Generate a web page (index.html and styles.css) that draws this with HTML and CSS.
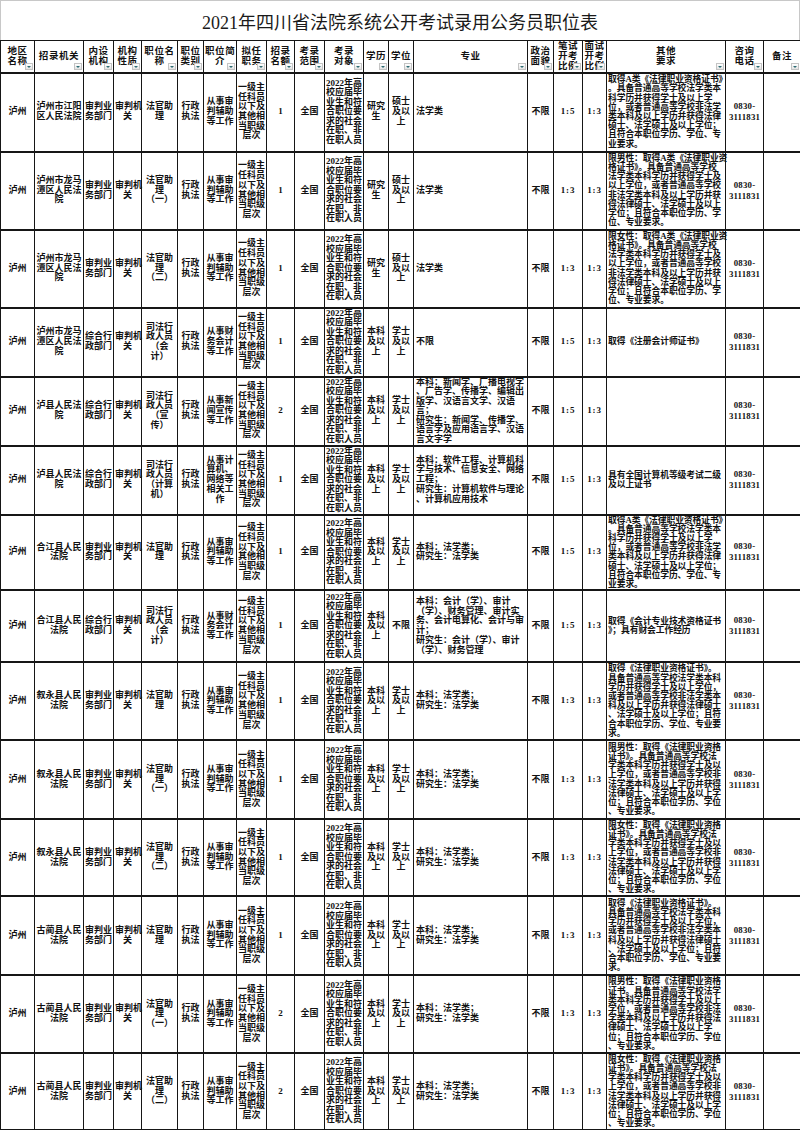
FILE: index.html
```html
<!DOCTYPE html>
<html lang="zh-CN">
<head>
<meta charset="utf-8">
<title>2021年四川省法院系统公开考试录用公务员职位表</title>
<link rel="stylesheet" href="styles.css">
</head>
<body>
<div class="sheet">
  <div class="title">2021年四川省法院系统公开考试录用公务员职位表</div>
  <table class="grid">
    <colgroup>
      <col class="w34"><col class="w49"><col class="w30"><col class="w28"><col class="w36"><col class="w26"><col class="w33"><col class="w30"><col class="w28"><col class="w30"><col class="w39"><col class="w25"><col class="w25"><col class="w114"><col class="w26"><col class="w29"><col class="w24"><col class="w119"><col class="w38"><col class="w37">
    </colgroup>
    <thead>
      <tr class="hd">
        <th>地区<br>名称<span class="flt"></span></th>
        <th>招录机关<span class="flt"></span></th>
        <th>内设<br>机构<span class="flt"></span></th>
        <th>机构<br>性质<span class="flt"></span></th>
        <th>职位名<br>称<span class="flt"></span></th>
        <th>职位<br>类别<span class="flt"></span></th>
        <th>职位简<br>介<span class="flt"></span></th>
        <th>拟任<br>职务<span class="flt"></span></th>
        <th>招录<br>名额<span class="flt"></span></th>
        <th>考录<br>范围<span class="flt"></span></th>
        <th>考录<br>对象<span class="flt"></span></th>
        <th>学历<span class="flt"></span></th>
        <th>学位<span class="flt"></span></th>
        <th>专业<span class="flt"></span></th>
        <th>政治<br>面貌<span class="flt"></span></th>
        <th>笔试<br>开考<br>比例<span class="flt"></span></th>
        <th>面试<br>开考<br>比例<span class="flt"></span></th>
        <th>其他<br>要求<span class="flt"></span></th>
        <th>咨询<br>电话<span class="flt"></span></th>
        <th>备注<span class="flt"></span></th>
      </tr>
    </thead>
    <tbody>
      <tr class="h79">
        <td>泸州</td><td>泸州市江阳<br>区人民法院</td><td>审判业<br>务部门</td><td>审判机<br>关</td><td>法官助<br>理</td><td>行政<br>执法</td><td>从事审<br>判辅助<br>等工作</td><td>一级主<br>任科员<br>以下及<br>其他相<br>当职级<br>层次</td><td>1</td><td>全国</td><td class="dx">2022年高<br>校应届毕<br>业生和符<br>合职位要<br>求的社会<br>在职、非<br>在职人员</td><td>研究<br>生</td><td>硕士<br>及以<br>上</td><td class="l">法学类</td><td>不限</td><td class="n">1:5</td><td class="n">1:3</td>
        <td class="req">取得A类《法律职业资格证书》<br>。具备普通高等学校法学类本<br>科学历并获得学士及以上学<br>位，或者普通高等学校非法学<br>类本科及以上学历并获得法律<br>硕士、法学硕士及以上学位；<br>且符合本职位学历、学位、专<br>业要求。</td><td class="ph">0830-<br>3111831</td><td></td>
      </tr>
      <tr class="h78">
        <td>泸州</td><td>泸州市龙马<br>潭区人民法<br>院</td><td>审判业<br>务部门</td><td>审判机<br>关</td><td>法官助<br>理<br>（一）</td><td>行政<br>执法</td><td>从事审<br>判辅助<br>等工作</td><td>一级主<br>任科员<br>以下及<br>其他相<br>当职级<br>层次</td><td>1</td><td>全国</td><td class="dx">2022年高<br>校应届毕<br>业生和符<br>合职位要<br>求的社会<br>在职、非<br>在职人员</td><td>研究<br>生</td><td>硕士<br>及以<br>上</td><td class="l">法学类</td><td>不限</td><td class="n">1:3</td><td class="n">1:3</td>
        <td class="req">限男性：取得A类《法律职业资<br>格证书》。具备普通高等学校<br>法学类本科学历并获得学士及<br>以上学位，或者普通高等学校<br>非法学类本科及以上学历并获<br>得法律硕士、法学硕士及以上<br>学位；且符合本职位学历、学<br>位、专业要求。</td><td class="ph">0830-<br>3111831</td><td></td>
      </tr>
      <tr class="h78">
        <td>泸州</td><td>泸州市龙马<br>潭区人民法<br>院</td><td>审判业<br>务部门</td><td>审判机<br>关</td><td>法官助<br>理<br>（二）</td><td>行政<br>执法</td><td>从事审<br>判辅助<br>等工作</td><td>一级主<br>任科员<br>以下及<br>其他相<br>当职级<br>层次</td><td>1</td><td>全国</td><td class="dx">2022年高<br>校应届毕<br>业生和符<br>合职位要<br>求的社会<br>在职、非<br>在职人员</td><td>研究<br>生</td><td>硕士<br>及以<br>上</td><td class="l">法学类</td><td>不限</td><td class="n">1:3</td><td class="n">1:3</td>
        <td class="req">限女性：取得A类《法律职业资<br>格证书》。具备普通高等学校<br>法学类本科学历并获得学士及<br>以上学位，或者普通高等学校<br>非法学类本科及以上学历并获<br>得法律硕士、法学硕士及以上<br>学位；且符合本职位学历、学<br>位、专业要求。</td><td class="ph">0830-<br>3111831</td><td></td>
      </tr>
      <tr class="h69">
        <td>泸州</td><td>泸州市龙马<br>潭区人民法<br>院</td><td>综合行<br>政部门</td><td>审判机<br>关</td><td>司法行<br>政人员<br>（会<br>计）</td><td>行政<br>执法</td><td>从事财<br>务会计<br>等工作</td><td>一级主<br>任科员<br>以下及<br>其他相<br>当职级<br>层次</td><td>1</td><td>全国</td><td class="dx">2022年高<br>校应届毕<br>业生和符<br>合职位要<br>求的社会<br>在职、非<br>在职人员</td><td>本科<br>及以<br>上</td><td>学士<br>及以<br>上</td><td class="l">不限</td><td>不限</td><td class="n">1:5</td><td class="n">1:3</td>
        <td class="req">取得《注册会计师证书》</td><td class="ph">0830-<br>3111831</td><td></td>
      </tr>
      <tr class="h69">
        <td>泸州</td><td>泸县人民法<br>院</td><td>综合行<br>政部门</td><td>审判机<br>关</td><td>司法行<br>政人员<br>（宣<br>传）</td><td>行政<br>执法</td><td>从事新<br>闻宣传<br>等工作</td><td>一级主<br>任科员<br>以下及<br>其他相<br>当职级<br>层次</td><td>2</td><td>全国</td><td class="dx">2022年高<br>校应届毕<br>业生和符<br>合职位要<br>求的社会<br>在职、非<br>在职人员</td><td>本科<br>及以<br>上</td><td>学士<br>及以<br>上</td><td class="l dx">本科：新闻学、广播电视学<br>、广告学、传播学、编辑出<br>版学、汉语言文学、汉语<br>言；<br>研究生：新闻学、传播学、<br>语言学及应用语言学、汉语<br>言文字学</td><td>不限</td><td class="n">1:5</td><td class="n">1:3</td>
        <td class="req"></td><td class="ph">0830-<br>3111831</td><td></td>
      </tr>
      <tr class="h69">
        <td>泸州</td><td>泸县人民法<br>院</td><td>综合行<br>政部门</td><td>审判机<br>关</td><td>司法行<br>政人员<br>（计算<br>机）</td><td>行政<br>执法</td><td>从事计<br>算机、<br>网络等<br>相关工<br>作</td><td>一级主<br>任科员<br>以下及<br>其他相<br>当职级<br>层次</td><td>1</td><td>全国</td><td class="dx">2022年高<br>校应届毕<br>业生和符<br>合职位要<br>求的社会<br>在职、非<br>在职人员</td><td>本科<br>及以<br>上</td><td>学士<br>及以<br>上</td><td class="l">本科：软件工程、计算机科<br>学与技术、信息安全、网络<br>工程；<br>研究生：计算机软件与理论<br>、计算机应用技术</td><td>不限</td><td class="n">1:5</td><td class="n">1:3</td>
        <td class="req">具有全国计算机等级考试二级<br>及以上证书</td><td class="ph">0830-<br>3111831</td><td></td>
      </tr>
      <tr class="h74">
        <td>泸州</td><td>合江县人民<br>法院</td><td>审判业<br>务部门</td><td>审判机<br>关</td><td>法官助<br>理</td><td>行政<br>执法</td><td>从事审<br>判辅助<br>等工作</td><td>一级主<br>任科员<br>以下及<br>其他相<br>当职级<br>层次</td><td>1</td><td>全国</td><td class="dx">2022年高<br>校应届毕<br>业生和符<br>合职位要<br>求的社会<br>在职、非<br>在职人员</td><td>本科<br>及以<br>上</td><td>学士<br>及以<br>上</td><td class="l">本科：法学类；<br>研究生：法学类</td><td>不限</td><td class="n">1:5</td><td class="n">1:3</td>
        <td class="req">取得A类《法律职业资格证书》<br>。具备普通高等学校法学类本<br>科学历并获得学士及以上学<br>位，或者普通高等学校非法学<br>类本科及以上学历并获得法律<br>硕士、法学硕士及以上学位；<br>且符合本职位学历、学位、专<br>业要求。</td><td class="ph">0830-<br>3111831</td><td></td>
      </tr>
      <tr class="h72">
        <td>泸州</td><td>合江县人民<br>法院</td><td>综合行<br>政部门</td><td>审判机<br>关</td><td>司法行<br>政人员<br>（会<br>计）</td><td>行政<br>执法</td><td>从事财<br>务会计<br>等工作</td><td>一级主<br>任科员<br>以下及<br>其他相<br>当职级<br>层次</td><td>1</td><td>全国</td><td class="dx">2022年高<br>校应届毕<br>业生和符<br>合职位要<br>求的社会<br>在职、非<br>在职人员</td><td>本科<br>及以<br>上</td><td>不限</td><td class="l">本科：会计（学）、审计<br>（学）、财务管理、审计实<br>务、会计电算化、会计与审<br>计；<br>研究生：会计（学）、审计<br>（学）、财务管理</td><td>不限</td><td class="n">1:5</td><td class="n">1:3</td>
        <td class="req">取得《会计专业技术资格证书<br>》；具有财会工作经历</td><td class="ph">0830-<br>3111831</td><td></td>
      </tr>
      <tr class="h78">
        <td>泸州</td><td>叙永县人民<br>法院</td><td>审判业<br>务部门</td><td>审判机<br>关</td><td>法官助<br>理</td><td>行政<br>执法</td><td>从事审<br>判辅助<br>等工作</td><td>一级主<br>任科员<br>以下及<br>其他相<br>当职级<br>层次</td><td>1</td><td>全国</td><td class="dx">2022年高<br>校应届毕<br>业生和符<br>合职位要<br>求的社会<br>在职、非<br>在职人员</td><td>本科<br>及以<br>上</td><td>学士<br>及以<br>上</td><td class="l">本科：法学类；<br>研究生：法学类</td><td>不限</td><td class="n">1:3</td><td class="n">1:3</td>
        <td class="req">取得《法律职业资格证书》。<br>具备普通高等学校法学类本科<br>学历并获得学士及以上学位，<br>或者普通高等学校非法学类本<br>科及以上学历并获得法律硕士<br>、法学硕士及以上学位；且符<br>合本职位学历、学位、专业要<br>求。</td><td class="ph">0830-<br>3111831</td><td></td>
      </tr>
      <tr class="h79">
        <td>泸州</td><td>叙永县人民<br>法院</td><td>审判业<br>务部门</td><td>审判机<br>关</td><td>法官助<br>理<br>（一）</td><td>行政<br>执法</td><td>从事审<br>判辅助<br>等工作</td><td>一级主<br>任科员<br>以下及<br>其他相<br>当职级<br>层次</td><td>1</td><td>全国</td><td class="dx">2022年高<br>校应届毕<br>业生和符<br>合职位要<br>求的社会<br>在职、非<br>在职人员</td><td>本科<br>及以<br>上</td><td>学士<br>及以<br>上</td><td class="l">本科：法学类；<br>研究生：法学类</td><td>不限</td><td class="n">1:3</td><td class="n">1:3</td>
        <td class="req">限男性：取得《法律职业资格<br>证书》。具备普通高等学校法<br>学类本科学历并获得学士及以<br>上学位，或者普通高等学校非<br>法学类本科及以上学历并获得<br>法律硕士、法学硕士及以上学<br>位；且符合本职位学历、学位<br>、专业要求。</td><td class="ph">0830-<br>3111831</td><td></td>
      </tr>
      <tr class="h77">
        <td>泸州</td><td>叙永县人民<br>法院</td><td>审判业<br>务部门</td><td>审判机<br>关</td><td>法官助<br>理<br>（二）</td><td>行政<br>执法</td><td>从事审<br>判辅助<br>等工作</td><td>一级主<br>任科员<br>以下及<br>其他相<br>当职级<br>层次</td><td>1</td><td>全国</td><td class="dx">2022年高<br>校应届毕<br>业生和符<br>合职位要<br>求的社会<br>在职、非<br>在职人员</td><td>本科<br>及以<br>上</td><td>学士<br>及以<br>上</td><td class="l">本科：法学类；<br>研究生：法学类</td><td>不限</td><td class="n">1:3</td><td class="n">1:3</td>
        <td class="req">限女性：取得《法律职业资格<br>证书》。具备普通高等学校法<br>学类本科学历并获得学士及以<br>上学位，或者普通高等学校非<br>法学类本科及以上学历并获得<br>法律硕士、法学硕士及以上学<br>位；且符合本职位学历、学位<br>、专业要求。</td><td class="ph">0830-<br>3111831</td><td></td>
      </tr>
      <tr class="h79">
        <td>泸州</td><td>古蔺县人民<br>法院</td><td>审判业<br>务部门</td><td>审判机<br>关</td><td>法官助<br>理</td><td>行政<br>执法</td><td>从事审<br>判辅助<br>等工作</td><td>一级主<br>任科员<br>以下及<br>其他相<br>当职级<br>层次</td><td>1</td><td>全国</td><td class="dx">2022年高<br>校应届毕<br>业生和符<br>合职位要<br>求的社会<br>在职、非<br>在职人员</td><td>本科<br>及以<br>上</td><td>学士<br>及以<br>上</td><td class="l">本科：法学类；<br>研究生：法学类</td><td>不限</td><td class="n">1:3</td><td class="n">1:3</td>
        <td class="req">取得《法律职业资格证书》。<br>具备普通高等学校法学类本科<br>学历并获得学士及以上学位，<br>或者普通高等学校非法学类本<br>科及以上学历并获得法律硕士<br>、法学硕士及以上学位；且符<br>合本职位学历、学位、专业要<br>求。</td><td class="ph">0830-<br>3111831</td><td></td>
      </tr>
      <tr class="h78">
        <td>泸州</td><td>古蔺县人民<br>法院</td><td>审判业<br>务部门</td><td>审判机<br>关</td><td>法官助<br>理<br>（一）</td><td>行政<br>执法</td><td>从事审<br>判辅助<br>等工作</td><td>一级主<br>任科员<br>以下及<br>其他相<br>当职级<br>层次</td><td>2</td><td>全国</td><td class="dx">2022年高<br>校应届毕<br>业生和符<br>合职位要<br>求的社会<br>在职、非<br>在职人员</td><td>本科<br>及以<br>上</td><td>学士<br>及以<br>上</td><td class="l">本科：法学类；<br>研究生：法学类</td><td>不限</td><td class="n">1:3</td><td class="n">1:3</td>
        <td class="req">限男性：取得《法律职业资格<br>证书。具备普通高等学校法学<br>类本科学历并获得学士及以上<br>学位，或者普通高等学校非法<br>学类本科及以上学历并获得法<br>律硕士、法学硕士及以上学<br>位；且符合本职位学历、学位<br>、专业要求。</td><td class="ph">0830-<br>3111831</td><td></td>
      </tr>
      <tr class="h77">
        <td>泸州</td><td>古蔺县人民<br>法院</td><td>审判业<br>务部门</td><td>审判机<br>关</td><td>法官助<br>理<br>（二）</td><td>行政<br>执法</td><td>从事审<br>判辅助<br>等工作</td><td>一级主<br>任科员<br>以下及<br>其他相<br>当职级<br>层次</td><td>2</td><td>全国</td><td class="dx">2022年高<br>校应届毕<br>业生和符<br>合职位要<br>求的社会<br>在职、非<br>在职人员</td><td>本科<br>及以<br>上</td><td>学士<br>及以<br>上</td><td class="l">本科：法学类；<br>研究生：法学类</td><td>不限</td><td class="n">1:3</td><td class="n">1:3</td>
        <td class="req">限女性：取得《法律职业资格<br>证书》。具备普通高等学校法<br>学类本科学历并获得学士及以<br>上学位，或者普通高等学校非<br>法学类本科及以上学历并获得<br>法律硕士、法学硕士及以上学<br>位；且符合本职位学历、学位<br>、专业要求。</td><td class="ph">0830-<br>3111831</td><td></td>
      </tr>
    </tbody>
  </table>
</div>
</body>
</html>
```

FILE: styles.css
```css
html, body {
  margin: 0;
  padding: 0;
  background: #ffffff;
}

.sheet {
  width: 800px;
  font-family: "Liberation Serif", "Noto Sans CJK SC", serif;
  color: #111111;
}

.title {
  height: 40px;
  box-sizing: border-box;
  border: 1px solid #c8c8c8;
  border-bottom: none;
  display: flex;
  align-items: center;
  justify-content: center;
  font-size: 18px;
  font-weight: 400;
  color: #1a1a1a;
}

.grid {
  width: 800px;
  table-layout: fixed;
  border-collapse: collapse;
}

.w34 { width: 34px; }
.w49 { width: 49px; }
.w30 { width: 30px; }
.w28 { width: 28px; }
.w36 { width: 36px; }
.w26 { width: 26px; }
.w33 { width: 33px; }
.w39 { width: 39px; }
.w25 { width: 25px; }
.w114 { width: 114px; }
.w29 { width: 29px; }
.w24 { width: 24px; }
.w119 { width: 119px; }
.w38 { width: 38px; }
.w37 { width: 37px; }

.grid th,
.grid td {
  border: 1px solid #161616;
  padding: 0 1px;
  text-align: center;
  vertical-align: middle;
  font-size: 9px;
  line-height: 9.7px;
  font-weight: 700;
  white-space: nowrap;
  overflow: visible;
}

.grid td {
  border-top-width: 2px;
  border-bottom-width: 2px;
}

.grid th {
  position: relative;
  font-size: 9.5px;
  line-height: 10px;
  letter-spacing: 0.6px;
}

.hd { height: 32px; }
.h69 { height: 69px; }
.h72 { height: 72px; }
.h74 { height: 74px; }
.h77 { height: 77px; }
.h78 { height: 78px; }
.h79 { height: 79px; }

.flt {
  position: absolute;
  right: 1px;
  bottom: 2px;
  width: 8px;
  height: 7px;
  box-sizing: border-box;
  border: 1px solid #c4c4c4;
  background: linear-gradient(#ffffff, #e4e4e4);
}

.flt::after {
  content: "";
  position: absolute;
  left: 1px;
  top: 2px;
  border-left: 2px solid transparent;
  border-right: 2px solid transparent;
  border-top: 2px solid #2d6b73;
}

.grid td.dx {
  line-height: 9.5px;
}

.grid td.l {
  text-align: left;
  padding-left: 2px;
}

.grid td.req {
  text-align: left;
  padding-left: 1px;
  font-size: 8.8px;
  letter-spacing: -0.1px;
  line-height: 9.2px;
}

.grid td.n {
  letter-spacing: 0.8px;
}

.grid td.ph {
  font-size: 8.8px;
  line-height: 11px;
  letter-spacing: 0.2px;
}
```
